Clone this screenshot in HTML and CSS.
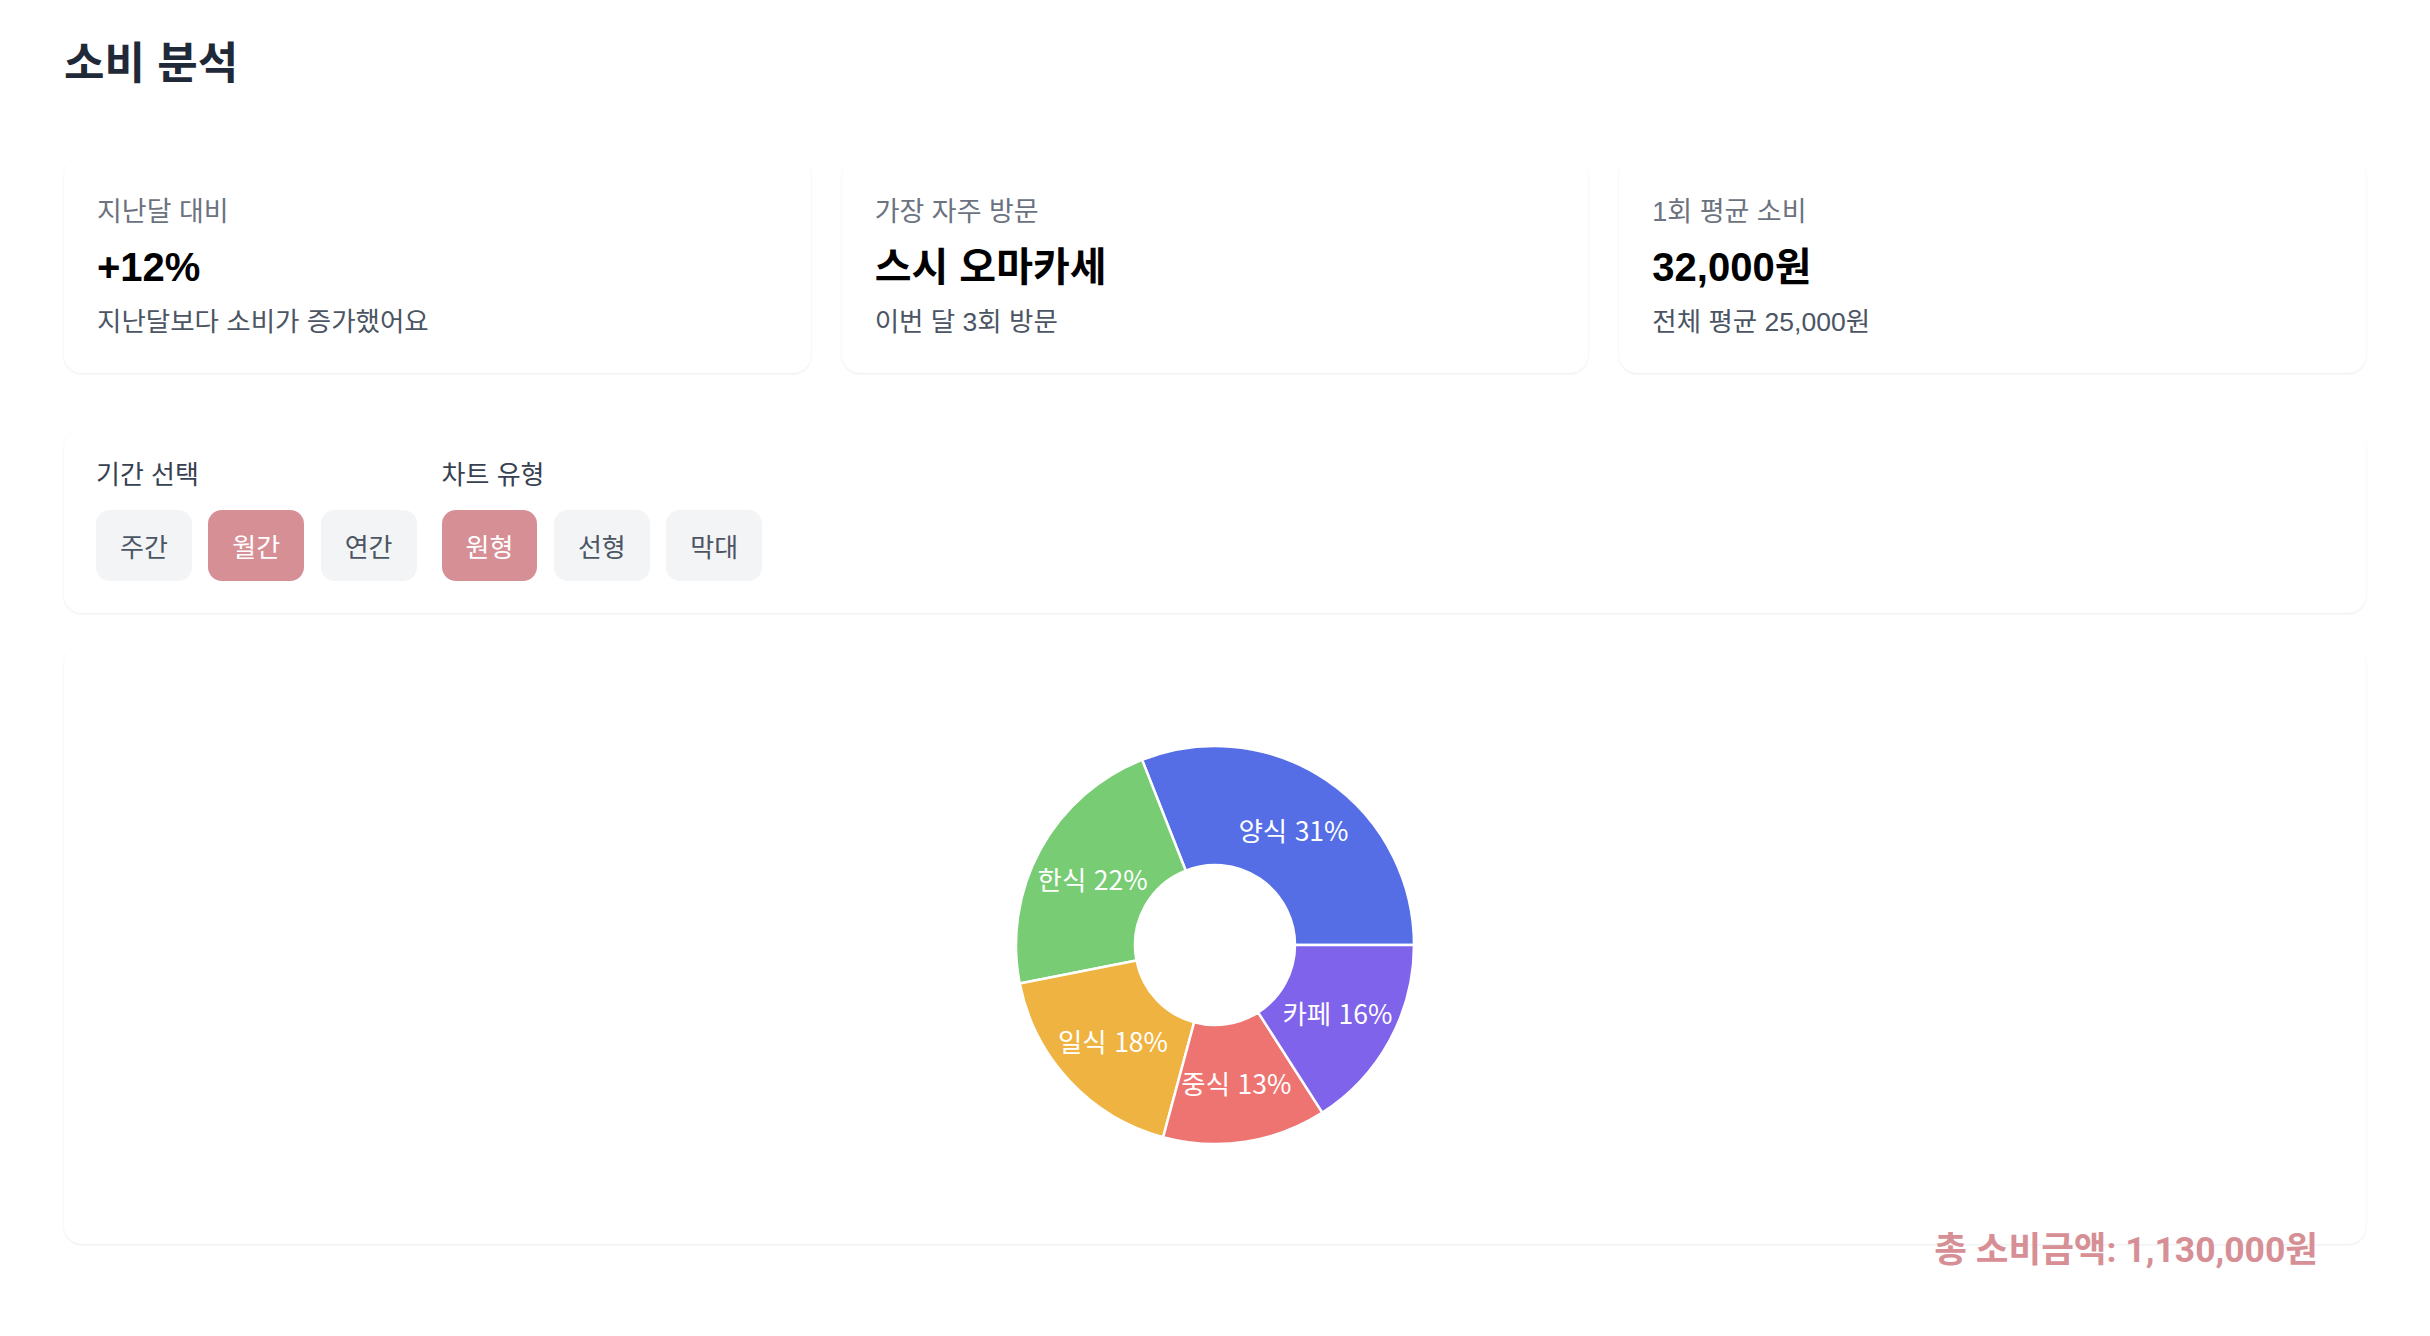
FILE: index.html
```html
<!DOCTYPE html>
<html lang="ko">
<head>
<meta charset="utf-8">
<title>소비 분석</title>
<link rel="stylesheet" href="styles.css">
</head>
<body>
<main class="page">
  <h1 class="title">소비 분석</h1>

  <section class="stats">
    <div class="card stat">
      <div class="stat-label">지난달 대비</div>
      <div class="stat-value">+12%</div>
      <div class="stat-sub">지난달보다 소비가 증가했어요</div>
    </div>
    <div class="card stat">
      <div class="stat-label">가장 자주 방문</div>
      <div class="stat-value">스시 오마카세</div>
      <div class="stat-sub">이번 달 3회 방문</div>
    </div>
    <div class="card stat">
      <div class="stat-label">1회 평균 소비</div>
      <div class="stat-value">32,000원</div>
      <div class="stat-sub">전체 평균 25,000원</div>
    </div>
  </section>

  <section class="card controls">
    <div class="group">
      <div class="group-label">기간 선택</div>
      <div class="buttons">
        <button class="btn">주간</button>
        <button class="btn active">월간</button>
        <button class="btn">연간</button>
      </div>
    </div>
    <div class="group">
      <div class="group-label">차트 유형</div>
      <div class="buttons">
        <button class="btn active">원형</button>
        <button class="btn">선형</button>
        <button class="btn">막대</button>
      </div>
    </div>
  </section>

  <section class="card chart">
    <svg class="pie" width="400" height="400" viewBox="0 0 400 400">
      <g stroke="#ffffff" stroke-width="2.5" stroke-linejoin="round">
        <path fill="#556ee6" d="M399 200 A199 199 0 0 0 127.07 14.85 L170.68 125.57 A80 80 0 0 1 280 200 Z"/>
        <path fill="#78cc74" d="M127.07 14.85 A199 199 0 0 0 4.76 238.49 L121.51 215.47 A80 80 0 0 1 170.68 125.57 Z"/>
        <path fill="#efb342" d="M4.76 238.49 A199 199 0 0 0 148.16 392.13 L179.16 277.24 A80 80 0 0 1 121.51 215.47 Z"/>
        <path fill="#ee7472" d="M148.16 392.13 A199 199 0 0 0 307.36 367.56 L243.16 267.36 A80 80 0 0 1 179.16 277.24 Z"/>
        <path fill="#7f63eb" d="M307.36 367.56 A199 199 0 0 0 399 200 L280 200 A80 80 0 0 1 243.16 267.36 Z"/>
      </g>
      <g class="pie-labels" fill="#ffffff" text-anchor="middle" dominant-baseline="central">
        <text x="278.5" y="84.7">양식 31%</text>
        <text x="77.6" y="133">한식 22%</text>
        <text x="98" y="295.1">일식 18%</text>
        <text x="221.3" y="337.9">중식 13%</text>
        <text x="322.4" y="267">카페 16%</text>
      </g>
    </svg>
    <div class="total">총 소비금액: 1,130,000원</div>
  </section>
</main>
</body>
</html>
```

FILE: styles.css
```css
* {
  box-sizing: border-box;
}

html, body {
  margin: 0;
  background: #ffffff;
}

body {
  font-family: "Liberation Sans", "Noto Sans CJK KR", sans-serif;
  color: #111827;
}

.page {
  padding: 34px 64px 40px;
}

.title {
  margin: 0 0 71px;
  font-family: "Noto Sans CJK KR", sans-serif;
  font-size: 44px;
  line-height: 53px;
  font-weight: 700;
  color: #1f2937;
}

.card {
  background: #ffffff;
  border-radius: 18px;
  box-shadow: 0 1px 3px rgba(0, 0, 0, 0.05), 0 1px 2px rgba(0, 0, 0, 0.03);
}

.stats {
  display: grid;
  grid-template-columns: repeat(3, 1fr);
  gap: 31px;
}

.stat {
  padding: 36px 33px 32px;
}

.stat-label {
  font-size: 27px;
  line-height: 37px;
  color: #6b7280;
}

.stat-value {
  margin-top: 12px;
  font-size: 40px;
  line-height: 49px;
  font-weight: 700;
  color: #000000;
}

.stat-sub {
  margin-top: 12px;
  font-size: 26.5px;
  line-height: 37px;
  color: #4b5563;
}

.controls {
  margin-top: 56px;
  padding: 25px 32px 32px;
  display: flex;
  gap: 25px;
}

.group-label {
  font-family: "Noto Sans CJK KR", sans-serif;
  font-size: 26px;
  line-height: 37px;
  font-weight: 400;
  color: #374151;
}

.buttons {
  margin-top: 19px;
  display: flex;
  gap: 16.5px;
}

.btn {
  height: 71px;
  padding: 0 24px;
  border: none;
  border-radius: 14px;
  background: #f3f4f6;
  color: #4b5563;
  font-family: "Noto Sans CJK KR", sans-serif;
  font-size: 26px;
  cursor: pointer;
}

.btn.active {
  background: #d78f96;
  color: #ffffff;
}

.chart {
  position: relative;
  margin-top: 33px;
  height: 598px;
  display: flex;
  align-items: center;
  justify-content: center;
}

.pie {
  display: block;
}

.pie-labels {
  font-family: "Noto Sans CJK KR", sans-serif;
  font-size: 26.5px;
}

.total {
  position: absolute;
  right: 48px;
  bottom: -27px;
  font-family: Roboto, "Noto Sans CJK KR", sans-serif;
  font-size: 35.5px;
  line-height: 42px;
  font-weight: 700;
  color: #d78f96;
}
```
